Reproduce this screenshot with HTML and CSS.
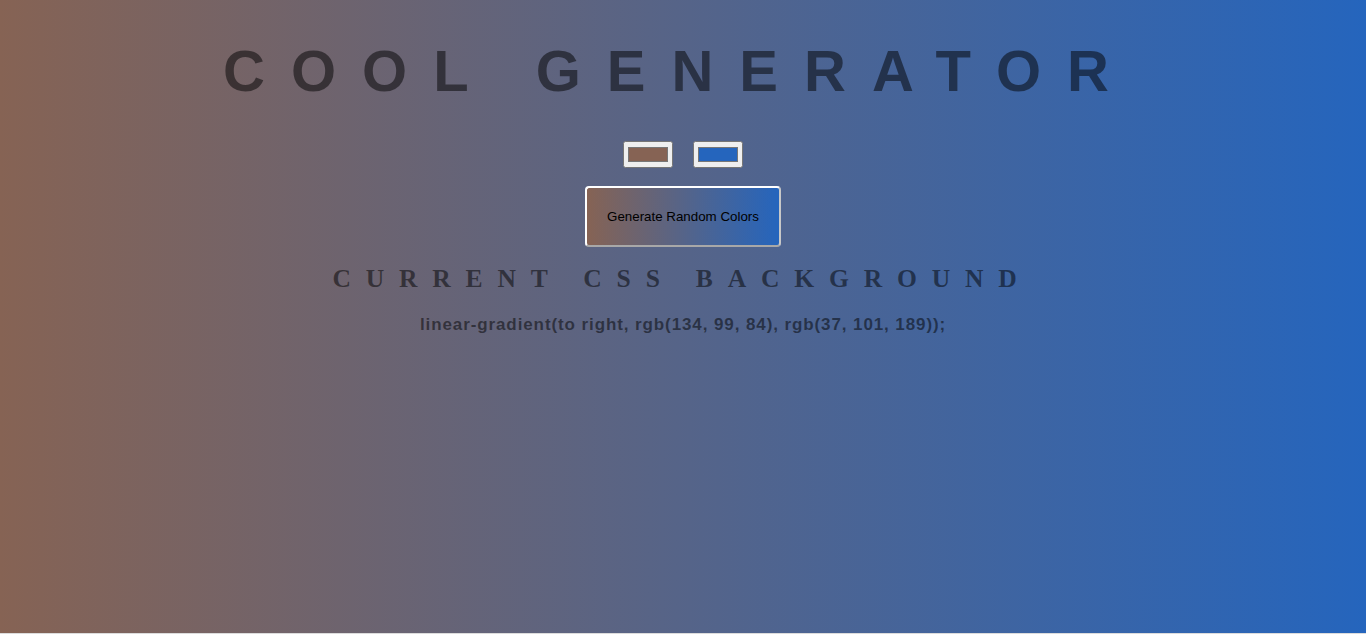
FILE: index.html
```html
<!DOCTYPE html>
<html lang="en">
<head>
<meta charset="utf-8">
<title>Cool Generator</title>
<link rel="stylesheet" href="styles.css">
</head>
<body>
<main class="page">
  <h1 class="title">COOL GENERATOR</h1>
  <div class="pickers">
    <input class="picker" type="color" value="#866354">
    <input class="picker" type="color" value="#2565bd">
  </div>
  <button class="generate" type="button">Generate Random Colors</button>
  <h2 class="subtitle">CURRENT CSS BACKGROUND</h2>
  <h3 class="code">linear-gradient(to right, rgb(134, 99, 84), rgb(37, 101, 189));</h3>
</main>
</body>
</html>
```

FILE: styles.css
```css
html {
  background: #dcdcdc;
}

body {
  margin: 0;
  height: calc(100vh - 1px);
  background: linear-gradient(to right, rgb(134, 99, 84), rgb(37, 101, 189));
  font-family: "Liberation Sans", Arial, sans-serif;
}

.page {
  display: flex;
  flex-direction: column;
  align-items: center;
  padding-top: 38px;
}

.title {
  margin: 0 0 0 -8px;
  font-size: 58px;
  line-height: 1.15;
  font-weight: bold;
  letter-spacing: 26px;
  color: rgba(0, 0, 0, 0.5);
}

.pickers {
  display: flex;
  gap: 20px;
  margin-top: 36px;
}

.picker {
  margin: 0;
}

.generate {
  margin-top: 18px;
  padding: 21px 20px;
  border: 2px solid;
  border-color: #ffffff #c8c8c8 #a8a8a8 #ffffff;
  border-radius: 4px;
  background: linear-gradient(to right, rgb(134, 99, 84), rgb(37, 101, 189));
  font-family: "Liberation Sans", Arial, sans-serif;
  font-size: 13.333px;
  line-height: 1.15;
  color: #000;
}

.subtitle {
  margin: 17px 0 0 -2px;
  font-family: "Liberation Serif", "Times New Roman", serif;
  font-size: 25.6px;
  line-height: 1.15;
  font-weight: bold;
  letter-spacing: 14.8px;
  color: rgba(0, 0, 0, 0.5);
}

.code {
  margin: 22px 0 0;
  font-size: 17px;
  line-height: 1.15;
  font-weight: bold;
  letter-spacing: 0.9px;
  color: rgba(0, 0, 0, 0.5);
}
```
